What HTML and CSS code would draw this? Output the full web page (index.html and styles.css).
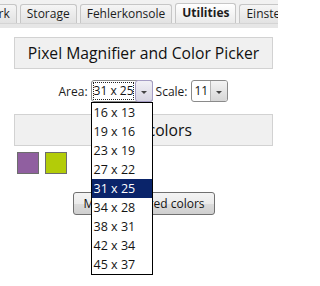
FILE: index.html
```html
<!DOCTYPE html>
<html>
<head>
<meta charset="utf-8">
<link rel="stylesheet" href="styles.css">
</head>
<body>
<div class="tabstrip">
  <div class="tabs">
    <div class="tab first">Network</div>
    <div class="tab">Storage</div>
    <div class="tab">Fehlerkonsole</div>
    <div class="tab active">Utilities</div>
    <div class="tab last">Einstellungen</div>
  </div>
  <div class="band"></div>
</div>
<div class="page">
  <div class="heading">Pixel Magnifier and Color Picker</div>
  <div class="controls">
    <span class="label">Area:</span>
    <div class="select area">
      <span class="value focus">31 x 25</span>
      <span class="arrow hot"><span class="tri"></span></span>
      <ul class="list">
        <li>16 x 13</li>
        <li>19 x 16</li>
        <li>23 x 19</li>
        <li>27 x 22</li>
        <li class="sel">31 x 25</li>
        <li>34 x 28</li>
        <li>38 x 31</li>
        <li>42 x 34</li>
        <li>45 x 37</li>
      </ul>
    </div>
    <span class="label">Scale:</span>
    <div class="select scale">
      <span class="value">11</span>
      <span class="arrow"><span class="tri"></span></span>
    </div>
  </div>
  <div class="heading second">Stored colors</div>
  <div class="swatches">
    <span class="swatch purple"></span>
    <span class="swatch green"></span>
  </div>
  <div class="btnrow">
    <button class="btn">Manage stored colors</button>
  </div>
</div>
</body>
</html>
```
FILE: styles.css
```css
html, body {
  margin: 0;
  padding: 0;
  background: #ffffff;
  font-family: "Open Sans", "Noto Sans", sans-serif;
  color: #141414;
}
body {
  width: 278px;
  height: 286px;
  overflow: hidden;
}
.tabstrip {
  background: #f1f1f1;
  overflow: hidden;
  width: 278px;
}
.tabs {
  display: flex;
  gap: 3px;
  padding-top: 4px;
  height: 19px;
  white-space: nowrap;
  overflow: hidden;
}
.tab {
  flex: none;
  height: 18px;
  line-height: 17px;
  padding: 0 6px;
  font-size: 12px;
  color: #1c1c1c;
  background: linear-gradient(#f5f5f5, #e2e2e2);
  border: 1px solid #c6c6c6;
  border-bottom: none;
  border-radius: 3px 3px 0 0;
}
.tab.first {
  margin-left: -45px;
}
.tab.last {
  flex: 1 1 0;
  min-width: 0;
  overflow: hidden;
  border-right: none;
  border-radius: 3px 0 0 0;
}
.tab.active {
  font-weight: bold;
  background: linear-gradient(#ffffff, #eaeaea);
  margin-top: -1px;
  height: 19px;
}
.band {
  height: 4px;
  background: #e6e6e6;
  border-top: 1px solid #d4d4d4;
}
.page {
  padding: 9px 5px 0 14px;
  position: relative;
  height: 249px;
}
.heading {
  height: 30px;
  line-height: 30px;
  background: #f0f0f0;
  border: 1px solid #d2d2d2;
  text-align: center;
  font-size: 15.7px;
  color: #111;
}
.controls {
  display: flex;
  align-items: center;
  justify-content: center;
  gap: 3px;
  margin-top: 11px;
  height: 22px;
  font-size: 12px;
}
.label {
  color: #1c1c1c;
}
.select {
  position: relative;
  display: flex;
  height: 20px;
  border: 1px solid #8a8a8a;
  border-radius: 3px;
  background: #fff;
  align-items: stretch;
}
.select.area {
  width: 60px;
}
.select.scale {
  width: 35px;
  margin-left: 1px;
}
.value {
  flex: 1;
  min-width: 0;
  font-size: 12px;
  line-height: 18px;
  padding-left: 1px;
  margin: 1px;
  white-space: nowrap;
  overflow: hidden;
}
.value.focus {
  outline: 1px dotted #222;
  outline-offset: -1px;
}
.arrow {
  width: 16px;
  flex: none;
  background: linear-gradient(#f4f4f4, #d6d6d6);
  border-left: 1px solid #b5b5b5;
  border-radius: 0 2px 2px 0;
  display: flex;
  align-items: center;
  justify-content: center;
}
.arrow.hot {
  border: 1px solid #a49cc4;
  margin: -1px -1px -1px 0;
  border-radius: 3px;
  background: linear-gradient(#f1f0f6, #d7d5e2);
}
.tri {
  width: 0;
  height: 0;
  border-left: 3px solid transparent;
  border-right: 3px solid transparent;
  border-top: 3px solid #444;
  margin-top: 2px;
}
.list {
  position: absolute;
  left: -1px;
  top: 21px;
  width: 60px;
  margin: 0;
  padding: 0;
  list-style: none;
  background: #fff;
  border: 1px solid #000;
  z-index: 5;
}
.list li {
  height: 19px;
  line-height: 19px;
  padding-left: 2px;
  font-size: 12.5px;
  color: #141414;
}
.list li.sel {
  background: #0a246a;
  color: #fff;
}
.second {
  margin-top: 12px;
}
.swatches {
  display: flex;
  gap: 6px;
  margin: 6px 0 0 3px;
}
.swatch {
  width: 20px;
  height: 20px;
  border: 1px solid #6d6d6d;
}
.purple { background: #905fa0; }
.green { background: #b3cc08; }
.btnrow {
  display: flex;
  margin: 18px 0 0 59px;
}
.btn {
  width: 142px;
  height: 23px;
  font-family: "Open Sans", "Noto Sans", sans-serif;
  font-size: 12px;
  color: #141414;
  background: linear-gradient(#f4f4f4 0%, #ebebeb 50%, #dcdcdc 51%, #cfcfcf 100%);
  border: 1px solid #707070;
  border-radius: 3px;
  padding: 0;
}
```
